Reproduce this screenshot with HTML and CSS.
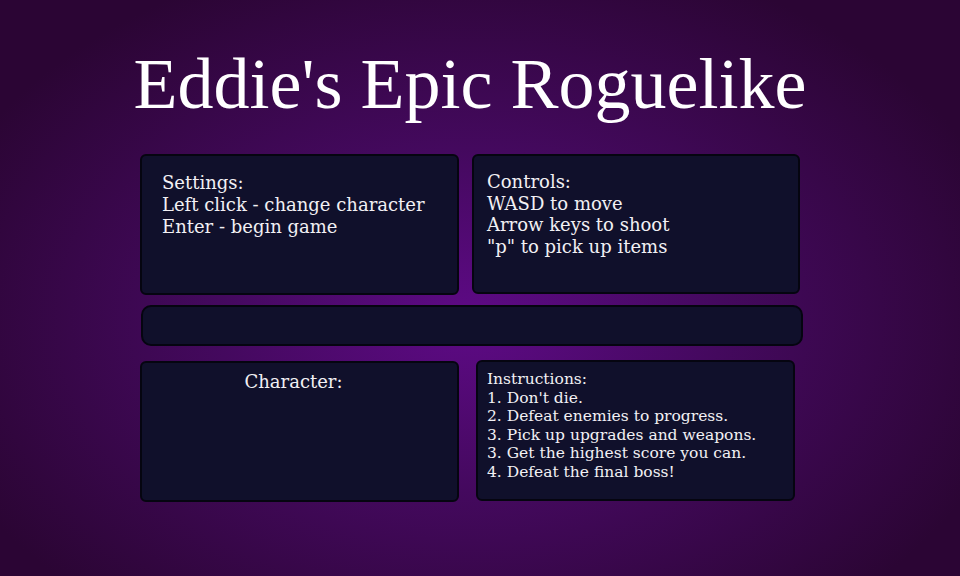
FILE: index.html
```html
<!DOCTYPE html>
<html lang="en">
<head>
  <meta charset="UTF-8">
  <title>Eddie's Epic Roguelike</title>
  <link rel="stylesheet" href="styles.css">
</head>
<body>
<h1 class="title">Eddie's Epic Roguelike</h1>

<div class="menu">
  <div class="row">
    <div class="panel settings">
      Settings:<br>
      Left click - change character<br>
      Enter - begin game
    </div>
    <div class="panel controls">
      Controls:<br>
      WASD to move<br>
      Arrow keys to shoot<br>
      "p" to pick up items
    </div>
  </div>

  <div class="panel bar"></div>

  <div class="row">
    <div class="panel character">Character:</div>
    <div class="panel instructions">
      Instructions:<br>
      1. Don't die.<br>
      2. Defeat enemies to progress.<br>
      3. Pick up upgrades and weapons.<br>
      3. Get the highest score you can.<br>
      4. Defeat the final boss!
    </div>
  </div>
</div>
</body>
</html>
```

FILE: styles.css
```css
html {
  height: 100%;
}

body {
  margin: 0;
  min-height: 100%;
  overflow: hidden;

  font-family: 'Liberation Serif', 'DejaVu Serif', serif;
  color: #f2f0f4;

  background: radial-gradient(ellipse 560px 380px at 470px 320px, #5e0a86 0%, #44095e 45%, #2b0534 100%);
  background-color: #2a0533;
}

.title {
  margin: 0;
  padding-top: 44px;
  width: 940px;
  text-align: center;
  font-weight: normal;
  font-size: 72px;
  line-height: 80px;
  color: #ffffff;
}

.menu {
  margin: 30px 0 0 140px;
  width: 663px;
}

.row {
  display: flex;
  justify-content: space-between;
}

.panel {
  box-sizing: border-box;
  background: #10102b;
  border: 2px solid #050510;
  border-radius: 6px;
  font-family: 'DejaVu Serif', serif;
  font-size: 18px;
  line-height: 21.5px;
}

.settings {
  width: 319px;
  height: 141px;
  padding: 16px 20px;
  line-height: 22px;
}

.controls {
  width: 328px;
  height: 140px;
  margin-right: 3px;
  padding: 15px 13px;
}

.bar {
  width: 662px;
  height: 41px;
  margin: 10px 0 15px 1px;
  border-radius: 10px;
}

.character {
  width: 319px;
  height: 141px;
  padding-top: 8px;
  text-align: center;
  padding-right: 12px;
}

.instructions {
  width: 319px;
  height: 141px;
  margin-right: 8px;
  margin-top: -1px;
  padding: 8px 9px;
  font-size: 15.5px;
  line-height: 18.5px;
}
```
